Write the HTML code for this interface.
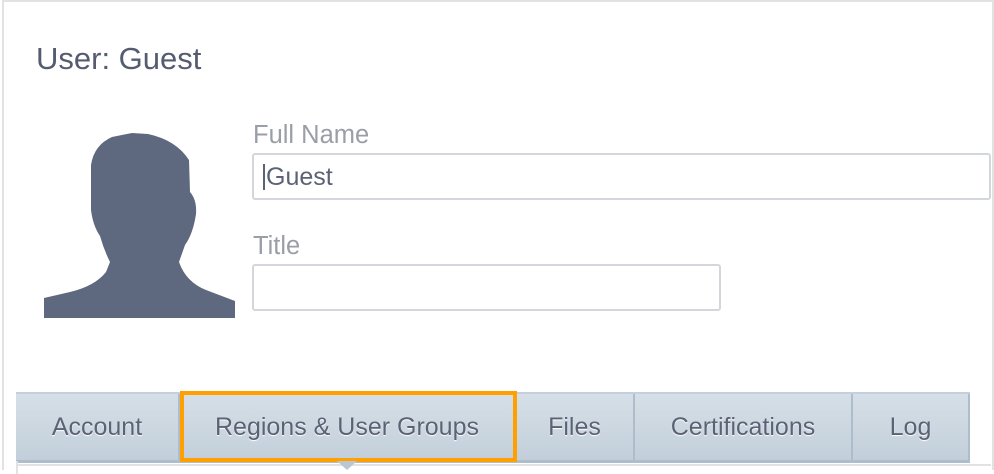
<!DOCTYPE html>
<html><head><style>
body{margin:0;width:994px;height:474px;overflow:hidden;background:#fff;font-family:"Liberation Sans",sans-serif;position:relative}
.frame{position:absolute;left:2px;top:0;width:992px;height:470px;border:2px solid #e2e2e2;border-bottom:none;box-sizing:border-box}
.t{position:absolute;left:36px;top:41px;font-size:31px;color:#555c70}
.lbl{position:absolute;left:253px;font-size:25.5px;color:#9a9ea6}
.in{position:absolute;border:2px solid #d3d6da;border-radius:3px;box-sizing:border-box;background:#fff}
.tabs{position:absolute;left:16px;top:392px;width:954px;height:69px;display:flex;border-top:2px solid #c4d0db}
.tab{height:100%;background:linear-gradient(#d6dfe7,#c2cfda);border-right:2px solid #aebdcb;border-bottom:3px solid #aebdcb;box-sizing:border-box;display:flex;align-items:center;justify-content:center;font-size:25px;color:#5c6276;text-shadow:0 1px 1px #fff}
.sel{position:absolute;left:180px;top:391px;width:337px;height:71px;border:4px solid #ff9f00;box-sizing:border-box}
</style></head><body>
<div class="frame"></div>
<div class="t">User: Guest</div>
<svg style="position:absolute;left:0;top:0" width="260" height="330"><path fill="#5e687e" d="M44,298 L70,292 Q95,286 106,272 L110,262 Q104,250 100,236 Q93,226 91,210 L91,165 Q94,145 112,137 L132,133 L148,134 Q176,140 189,160 L190,192 Q197,200 196,214 Q193,234 185,245 L179,262 Q186,282 206,290 L235,301 L235,318 L44,318 Z"/></svg>
<div class="lbl" style="top:121px">Full Name</div>
<div class="in" style="left:252px;top:153px;width:739px;height:47px;z-index:2"><span style="position:absolute;left:9px;top:9px;font-size:25px;color:#5c6276;border-left:2px solid #5c6276;padding-left:1px;line-height:26px">Guest</span></div>
<div class="lbl" style="top:232px">Title</div>
<div class="in" style="left:252px;top:264px;width:469px;height:47px"></div>
<div class="tabs">
<div class="tab" style="width:164px">Account</div>
<div class="tab" style="width:336px">Regions &amp; User Groups</div>
<div class="tab" style="width:119px">Files</div>
<div class="tab" style="width:218px">Certifications</div>
<div class="tab" style="width:117px">Log</div>
</div>
<div class="sel"></div>
<div style="position:absolute;left:16px;top:464px;width:975px;height:2px;background:#e2e2e2"></div>
<div style="position:absolute;left:16px;top:461px;width:2px;height:13px;background:#e2e2e2"></div>
<div style="position:absolute;left:337px;top:461px;width:0;height:0;border-left:10px solid transparent;border-right:10px solid transparent;border-top:9px solid #b9c7d3"></div>
</body></html>
